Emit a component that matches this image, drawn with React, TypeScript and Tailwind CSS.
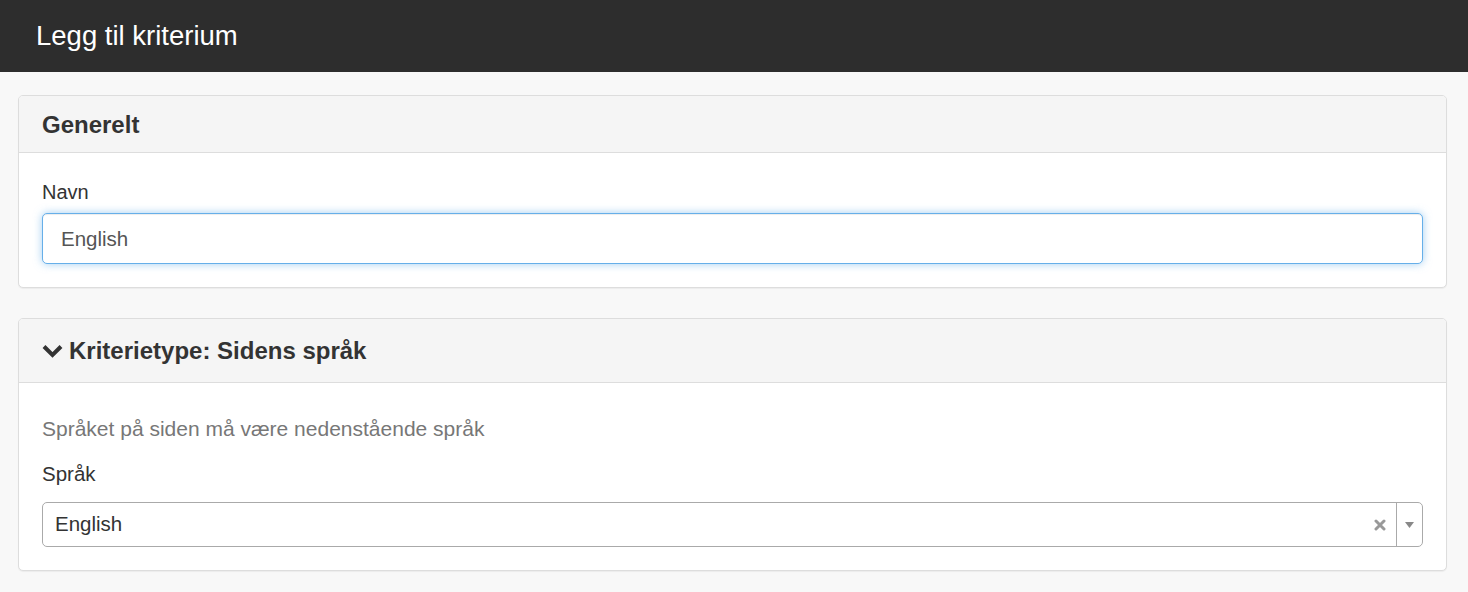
import React from 'react';

const font = { fontFamily: '"Liberation Sans", Arial, sans-serif' };

const Panel: React.FC<{ title: React.ReactNode; headerClass: string; bodyClass: string; children: React.ReactNode }> = ({
  title,
  headerClass,
  bodyClass,
  children,
}) => (
  <section className="bg-white border border-[#dddddd] rounded-[5px] shadow-[0_1px_1px_rgba(0,0,0,0.05)] overflow-hidden">
    <div className={`bg-[#f5f5f5] border-b border-[#dddddd] flex items-center px-[23px] ${headerClass}`}>
      <h2 className="text-[24px] leading-[32px] font-bold text-[#333333] flex items-center">{title}</h2>
    </div>
    <div className={`px-[23px] ${bodyClass}`}>{children}</div>
  </section>
);

export default function App() {
  return (
    <div className="min-h-screen bg-[#f8f8f8] text-[#333333]" style={font}>
      {/* Top bar */}
      <header className="h-[72px] bg-[#2d2d2d] flex items-center px-[36px]">
        <h1 className="text-[27.5px] text-white leading-none">Legg til kriterium</h1>
      </header>

      <main className="pl-[18px] pr-[21px] pt-[23px] pb-[20px] flex flex-col gap-[30px] w-full">
        {/* General */}
        <Panel title="Generelt" headerClass="h-[57px] pt-[1px]" bodyClass="pt-[25px] pb-[23px]">
          <label className="block text-[20px] leading-[28px]">Navn</label>
          <input
            defaultValue="English"
            className="mt-[7px] w-full h-[51px] px-[18px] text-[20.5px] text-[#555555] bg-white border border-[#66afe9] rounded-[5px] outline-none shadow-[inset_0_1px_1px_rgba(0,0,0,0.075),0_0_8px_rgba(102,175,233,0.6)]"
            style={font}
          />
        </Panel>

        {/* Criterion type */}
        <Panel
          title={
            <>
              <svg width="21" height="14" viewBox="0 0 21 14" className="mr-[6px]">
                <path d="M2 2.5 L10.5 11 L19 2.5" fill="none" stroke="#333333" strokeWidth="4" strokeLinecap="butt" />
              </svg>
              Kriterietype: Sidens språk
            </>
          }
          headerClass="h-[64px]"
          bodyClass="pt-[32px] pb-[23px]"
        >
          <p className="text-[21px] leading-[28px] text-[#777777]">Språket på siden må være nedenstående språk</p>
          <label className="block mt-[17px] text-[20.5px] leading-[28px]">Språk</label>
          <div className="mt-[14px] h-[45px] flex items-stretch border border-[#aaaaaa] rounded-[5px] bg-white">
            <span className="flex-1 flex items-center pl-[12px] text-[20.5px] text-[#333333]">English</span>
            <span className="w-[30px] flex items-center justify-center mr-[1px]">
              <svg width="12" height="12" viewBox="0 0 12 12">
                <path d="M2 2 L10 10 M10 2 L2 10" stroke="#999999" strokeWidth="3" strokeLinecap="round" />
              </svg>
            </span>
            <span className="w-[26px] border-l border-[#aaaaaa] flex items-center justify-center">
              <svg width="9" height="6" viewBox="0 0 9 6">
                <path d="M0 0 L9 0 L4.5 6 Z" fill="#888888" />
              </svg>
            </span>
          </div>
        </Panel>
      </main>
    </div>
  );
}
